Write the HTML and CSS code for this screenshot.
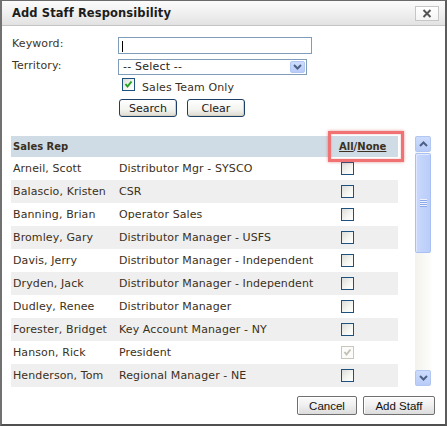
FILE: index.html
```html
<!DOCTYPE html>
<html>
<head>
<meta charset="utf-8">
<link rel="stylesheet" href="styles.css">
</head>
<body>
<div class="dialog">
  <div class="titlebar">
    <span class="title">Add Staff Responsibility</span>
    <span class="close"><svg width="10" height="9" viewBox="0 0 10 9"><path d="M1.5 1 L8.5 8 M8.5 1 L1.5 8" stroke="#555" stroke-width="2" fill="none"/></svg></span>
  </div>
  <div class="form">
    <span class="label">Keyword:</span>
    <span class="textbox"><span class="caret"></span></span>
    <span class="label label-territory">Territory:</span>
    <span class="select"><span class="select-text">-- Select --</span><span class="arrow-btn select-btn"><svg width="9" height="6" viewBox="0 0 9 6"><path d="M1 1 L4.5 4.5 L8 1" stroke="#4d6185" stroke-width="2" fill="none"/></svg></span></span>
    <span></span>
    <span class="check-row"><span class="checkbox"><svg width="11" height="11" viewBox="0 0 11 11"><path d="M2.5 5 L4.5 7.5 L8.5 2.5" stroke="#21a121" stroke-width="2" fill="none"/></svg></span><span class="check-label">Sales Team Only</span></span>
    <span></span>
    <span class="btn-row"><span class="xp-btn">Search</span><span class="xp-btn">Clear</span></span>
  </div>
  <div class="list-area">
    <div class="list">
      <div class="row head"><span class="c1">Sales Rep</span><span class="c2"></span><span class="c3"><span class="lnk">All</span>/<span class="lnk">None</span></span></div>
      <div class="row"><span class="c1">Arneil, Scott</span><span class="c2">Distributor Mgr - SYSCO</span><span class="c3"><span class="box"></span></span></div>
      <div class="row alt"><span class="c1">Balascio, Kristen</span><span class="c2">CSR</span><span class="c3"><span class="box"></span></span></div>
      <div class="row"><span class="c1">Banning, Brian</span><span class="c2">Operator Sales</span><span class="c3"><span class="box"></span></span></div>
      <div class="row alt"><span class="c1">Bromley, Gary</span><span class="c2">Distributor Manager - USFS</span><span class="c3"><span class="box"></span></span></div>
      <div class="row"><span class="c1">Davis, Jerry</span><span class="c2">Distributor Manager - Independent</span><span class="c3"><span class="box"></span></span></div>
      <div class="row alt"><span class="c1">Dryden, Jack</span><span class="c2">Distributor Manager - Independent</span><span class="c3"><span class="box"></span></span></div>
      <div class="row"><span class="c1">Dudley, Renee</span><span class="c2">Distributor Manager</span><span class="c3"><span class="box"></span></span></div>
      <div class="row alt"><span class="c1">Forester, Bridget</span><span class="c2">Key Account Manager - NY</span><span class="c3"><span class="box"></span></span></div>
      <div class="row"><span class="c1">Hanson, Rick</span><span class="c2">President</span><span class="c3"><span class="box disabled"><svg width="11" height="11" viewBox="0 0 11 11"><path d="M2.5 5 L4.5 7.5 L8.5 2.5" stroke="#c4c2b6" stroke-width="2" fill="none"/></svg></span></span></div>
      <div class="row alt"><span class="c1">Henderson, Tom</span><span class="c2">Regional Manager - NE</span><span class="c3"><span class="box"></span></span></div>
    </div>
    <div class="scrollbar">
      <span class="arrow-btn sb-btn"><svg width="9" height="6" viewBox="0 0 9 6"><path d="M1 5 L4.5 1.5 L8 5" stroke="#4d6185" stroke-width="2" fill="none"/></svg></span>
      <span class="thumb"><span class="grip"></span></span>
      <span class="track"></span>
      <span class="arrow-btn sb-btn"><svg width="9" height="6" viewBox="0 0 9 6"><path d="M1 1 L4.5 4.5 L8 1" stroke="#4d6185" stroke-width="2" fill="none"/></svg></span>
    </div>
  </div>
  <div class="footer">
    <span class="win-btn cancel">Cancel</span>
    <span class="win-btn add">Add Staff</span>
  </div>
  <div class="highlight"></div>
</div>
</body>
</html>
```
FILE: styles.css
```css
* { box-sizing: border-box; }
html, body { margin: 0; padding: 0; background: #fff; }
body { font-family: "DejaVu Sans", Verdana, sans-serif; font-size: 11px; color: #3b3020; }

.dialog {
  position: relative;
  width: 447px;
  height: 426px;
  border-top: 1px solid #6a6a6a;
  border-left: 2px solid #717171;
  border-right: 2px solid #5c5c5c;
  border-bottom: 2px solid #505050;
  background: #fff;
  display: flex;
  flex-direction: column;
}

.titlebar {
  height: 25px;
  border-bottom: 1px solid #c4c4c4;
  background: linear-gradient(#fbfbfb, #f0f0f0 50%, #e2e2e2);
  display: flex;
  align-items: center;
  justify-content: space-between;
  padding: 0 6px 0 10px;
}
.title { font-weight: bold; font-size: 11.5px; color: #1c1c1c; letter-spacing: 0.1px; }
.close {
  width: 24px; height: 15px;
  border: 1px solid #c6c6c6;
  background: linear-gradient(#ffffff, #f4f4f4);
  display: flex; align-items: center; justify-content: center;
  margin-top: 1px;
}

.form {
  display: grid;
  grid-template-columns: 106px 1fr;
  padding: 11px 0 0 10px;
  align-items: start;
}
.label { line-height: 14px; color: #3f3424; letter-spacing: 0.1px; }
.label-territory { margin-top: 5px; }
.textbox {
  position: relative;
  display: block;
  width: 194px; height: 17px;
  border: 1px solid #7f9db9;
  background: #fff;
}
.caret { position: absolute; left: 3px; top: 3px; width: 1px; height: 11px; background: #000; }
.select {
  display: flex; align-items: center; justify-content: space-between;
  width: 189px; height: 16px;
  margin-top: 5px;
  border: 1px solid #7f9db9;
  padding: 0 1px 0 4px;
  background: #fff;
  color: #1f1f1f;
}
.select-text { line-height: 14px; letter-spacing: 0.2px; }
.arrow-btn {
  display: flex; align-items: center; justify-content: center;
  background: linear-gradient(#cddcfd, #b9ccf8);
  border: 1px solid #b2c6f4;
  border-radius: 2px;
}
.select-btn { width: 15px; height: 12px; }

.check-row { display: flex; align-items: flex-start; margin: 3px 0 0 4px; height: 13px; }
.checkbox, .box {
  width: 13px; height: 13px;
  border: 1px solid #1c5180;
  background: linear-gradient(135deg, #dcdcd7, #f6f6f3 60%, #ffffff);
  display: flex; align-items: center; justify-content: center;
  flex: none;
}
.check-label { margin-left: 7px; margin-top: 3px; line-height: 13px; letter-spacing: 0.1px; }

.btn-row { display: flex; gap: 10px; margin: 8px 0 0 1px; }
.xp-btn {
  width: 58px; height: 18px;
  border: 1px solid #1d3f66;
  border-radius: 3px;
  background: linear-gradient(#ffffff, #f3f3ef 60%, #dedbd0);
  display: flex; align-items: center; justify-content: center;
  color: #1a1a1a;
  box-shadow: inset -1px -1px 0 #d6d2c2;
}

.list-area { display: flex; margin-top: 19px; padding-left: 9px; gap: 17px; }
.list { width: 387px; }
.row {
  display: grid;
  grid-template-columns: 108px 220px 59px;
  height: 23px;
  align-items: center;
  background: #fff;
  white-space: nowrap;
  letter-spacing: 0.1px;
}
.row.alt { background: #efefef; }
.row.head { height: 21px; background: #cfdce6; font-weight: bold; font-size: 10px; letter-spacing: 0; }
.c1 { padding-left: 2px; }
.c2 { padding-left: 0; }
.c3 { display: flex; align-items: center; }
.row:not(.head) .c3 { padding-left: 2px; }
.lnk { text-decoration: underline; }
.box.disabled { border-color: #c9c7bc; background: #fbfbf9; }

.scrollbar { width: 16px; height: 250px; display: flex; flex-direction: column; background: linear-gradient(90deg, #f3f2ec, #fdfdfb); }
.sb-btn { height: 16px; flex: none; }
.thumb {
  height: 100px; margin-top: 1px; flex: none;
  background: linear-gradient(90deg, #c9d8fc, #bacdf9);
  border: 1px solid #a9c0f4;
  border-radius: 2px;
  display: flex; align-items: center; justify-content: center;
  box-shadow: inset 1px 1px 0 #dfe8fe;
}
.grip {
  width: 7px; height: 8px;
  background: repeating-linear-gradient(#eef3fe 0 1px, #8ba9ea 1px 2px);
}
.track { flex: 1; }

.footer { display: flex; justify-content: flex-end; gap: 6px; margin-top: 9px; padding-right: 10px; }
.win-btn {
  height: 19px;
  border: 1px solid #6f6f6f;
  border-radius: 2px;
  background: linear-gradient(#fbfbfb, #efefef 50%, #dcdcdc);
  box-shadow: inset 1px 1px 0 #fff;
  display: flex; align-items: center; justify-content: center;
  font-family: "Liberation Sans", Arial, sans-serif;
  font-size: 11.5px;
  color: #111;
}
.cancel { width: 60px; }
.add { width: 72px; }

.highlight {
  position: absolute;
  left: 326px; top: 130px;
  width: 76px; height: 31px;
  border: 3px solid #f07272;
  box-shadow: 0 0 3px rgba(200, 70, 70, 0.55), inset 0 0 2px rgba(200, 70, 70, 0.4);
}
```
